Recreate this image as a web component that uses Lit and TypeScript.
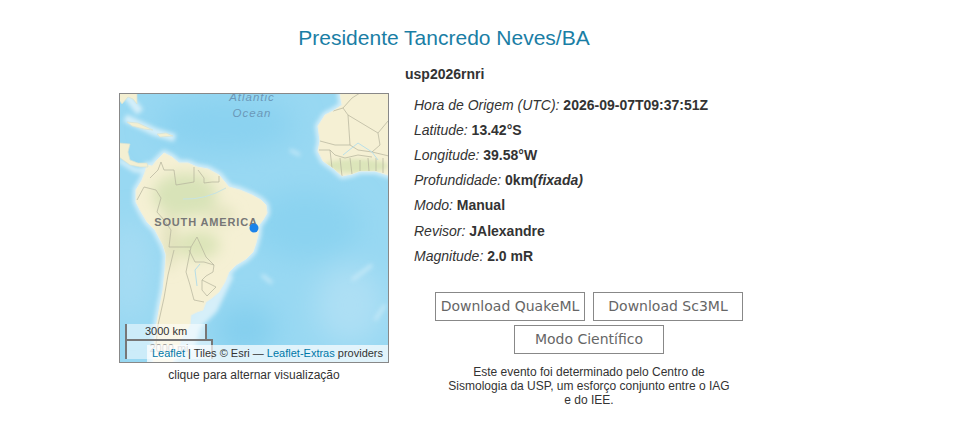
import { LitElement, html, css, svg } from "lit";
import { customElement } from "lit/decorators.js";

const rows: [string, string, string?][] = [
  ["Hora de Origem (UTC):", "2026-09-07T09:37:51Z"],
  ["Latitude:", "13.42°S"],
  ["Longitude:", "39.58°W"],
  ["Profundidade:", "0km", "(fixada)"],
  ["Modo:", "Manual"],
  ["Revisor:", "JAlexandre"],
  ["Magnitude:", "2.0 mR"],
];

const SA = "M147 165 L152 166 L157 160 L164 153 L172 157 L179 163 L188 163 L197 167 L208 169 L219 175 L224 181 L229 187 L240 190 L252 195 L261 200 L266 205 L267 213 L263 220 L259 225 L258 235 L256 243 L253 252 L246 259 L236 265 L229 272 L225 282 L219 292 L212 298 L206 302 L203 310 L197 312 L191 315 L190 325 L182 338 L177 352 L172 363 L153 363 L154 355 L155 335 L157 322 L160 305 L163 290 L165 270 L166 255 L163 245 L155 230 L147 222 L140 210 L136 202 L136 190 L142 180 L145 172 Z";
const AF = "M340 93 L342 105 L333 111 L325 115 L318 126 L320 141 L318 151 L323 161 L333 168 L342 176 L352 174 L360 171 L375 171 L388 175 L389 175 L389 93 Z";

const mapArt = svg`
  <defs>
    <filter id="b8" x="-30%" y="-30%" width="160%" height="160%"><feGaussianBlur stdDeviation="7"/></filter>
    <filter id="b2" x="-30%" y="-30%" width="160%" height="160%"><feGaussianBlur stdDeviation="2"/></filter>
    <filter id="b14" x="-40%" y="-40%" width="180%" height="180%"><feGaussianBlur stdDeviation="14"/></filter>
    <clipPath id="sa"><path d=${SA}/></clipPath>
    <clipPath id="af"><path d=${AF}/></clipPath>
  </defs>
  <rect x="119" y="93" width="270" height="270" fill="#98d8f2"/>
  <g filter="url(#b14)">
    <ellipse cx="225" cy="125" rx="70" ry="28" fill="#8ad2f0"/>
    <ellipse cx="305" cy="225" rx="55" ry="35" fill="#8bd3f0"/>
    <ellipse cx="245" cy="330" rx="30" ry="26" fill="#84cfee"/>
    <ellipse cx="350" cy="305" rx="35" ry="40" fill="#addff4"/>
    <ellipse cx="130" cy="270" rx="22" ry="50" fill="#a6dcf3"/>
  </g>
  <g filter="url(#b2)" fill="none" stroke="#d6eff9" stroke-width="6" stroke-linejoin="round">
    <path d=${SA}/><path d=${AF}/>
    <path d="M125 93 L140 112 M125 118 L155 132 L175 138" stroke-width="8"/>
    <path d="M119 160 L135 170 L150 170" stroke-width="5"/>
    <path d="M228 274 L212 308 L195 325 L188 350" stroke-width="12"/>
    <path d="M262 275 L272 283 M352 280 L372 265 M375 320 L385 305 M290 150 L300 155" stroke="#c8eaf8" stroke-width="3"/>
  </g>
  <path d=${SA} fill="#f5f0d4" stroke="#eef0e0" stroke-width="1"/>
  <g clip-path="url(#sa)">
    <g filter="url(#b8)">
      <ellipse cx="185" cy="195" rx="32" ry="22" fill="#d8e3b8"/>
      <ellipse cx="198" cy="245" rx="22" ry="14" fill="#dbe4b8"/>
      <ellipse cx="170" cy="240" rx="5" ry="30" fill="#d9dcb4"/>
      <ellipse cx="220" cy="215" rx="15" ry="9" fill="#e2e4bf"/>
    </g>
    <g fill="none" stroke="#b3b19b" stroke-width=".7" stroke-linejoin="round">
      <path d="M161 162 L164 170 L174 170 L176 185 L194 182 L194 167"/>
      <path d="M198 170 L204 178 L204 183 L212 182 L219 182 L219 176"/>
      <path d="M137 200 L144 187 L156 190 L161 198 L157 212 L164 220 L171 230"/>
      <path d="M171 230 L169 247 L191 247 L197 237 L206 257 L214 265"/>
      <path d="M174 250 L168 275 L164 298 L158 325 L156 345"/>
      <path d="M189 250 L195 262 L204 262 L214 265 L213 272 L206 276 L202 280 L216 287 L207 296 L202 290 L202 280"/>
      <path d="M191 247 L186 272 L190 285 L194 300 L204 302"/>
      <path d="M150 178 L158 170 L161 162"/>
    </g>
  </g>
  <path d="M183 199 Q205 200 226 188" fill="none" stroke="#c6e3e3" stroke-width="1"/>
  <path d="M197 286 L195 270 L200 264" fill="none" stroke="#b5dde8" stroke-width="1"/>
  <path d=${AF} fill="#f5f0d4" stroke="#eef0e0" stroke-width="1"/>
  <g clip-path="url(#af)">
    <g filter="url(#b2)">
      <ellipse cx="356" cy="166" rx="32" ry="7" fill="#dce5ba"/>
    </g>
    <g fill="none" stroke="#b3b19b" stroke-width=".7" stroke-linejoin="round">
      <path d="M333 111 L343 108 L352 98 L360 93"/>
      <path d="M343 108 L348 115 L350 145 L335 145 L320 141"/>
      <path d="M348 115 L378 133 L388 121"/>
      <path d="M378 133 L380 145 L372 152 L389 156"/>
      <path d="M350 145 L358 150 L372 152"/>
      <path d="M319 150 L330 150 L335 155 L345 158 L358 155 L372 157"/>
      <path d="M330 150 L332 168 M340 158 L342 176 M350 158 L352 174 M360 160 L360 171 M368 158 L369 171 M376 158 L376 171 M383 158 L383 173"/>
    </g>
    <path d="M343 155 L358 143 L372 152 L378 160" fill="none" stroke="#b9dfe8" stroke-width="1"/>
  </g>
  <g fill="#f3efd2" stroke="#d6e2d6" stroke-width=".7">
    <path d="M119 93 L137 93 L137 104 L133 99 L128 97 L122 104 L119 100 Z"/>
    <path d="M127 122 L138 123 L153 130 L144 129 L132 126 Z"/>
    <path d="M157 134 L166 133 L173 136 L160 137 Z"/>
    <path d="M119 143 L130 144 L128 152 L130 160 L138 163 L147 163 L148 167 L140 167 L130 165 L119 157 Z"/>
  </g>
  <text x="252" y="101" class="sea" letter-spacing="1">Atlantic</text>
  <text x="252" y="117" class="sea" letter-spacing="1">Ocean</text>
  <text x="206" y="226" class="cont">SOUTH AMERICA</text>
  <circle cx="254" cy="228" r="4.5" fill="#1a82ea"/>
`;

@customElement("app-root")
export class AppRoot extends LitElement {
  static styles = css`
    :host { display: block; height: 440px; font-family: "Liberation Sans", Arial, sans-serif; color: #333; background: #fff; overflow: hidden; }
    .title { margin: 0; padding-top: 25px; text-align: center; font-size: 21px; line-height: 26px; font-weight: 400; color: #1a7ea5; width: 888px; }
    .body { display: grid; grid-template-columns: 270px 1fr; column-gap: 16px; padding: 15px 0 0 119px; width: 640px; }
    .left { padding-top: 27px; }
    .map { position: relative; width: 270px; height: 270px; box-sizing: border-box; border: 1px solid #888; overflow: hidden; }
    .map svg { position: absolute; left: -1px; top: -1px; display: block; }
    .sea { font: italic 11.5px "Liberation Sans", Arial, sans-serif; fill: #6b98b8; text-anchor: middle; }
    .cont { font: bold 11px "Liberation Sans", Arial, sans-serif; fill: #777; text-anchor: middle; letter-spacing: .85px; }
    .scale { position: absolute; left: 5px; box-sizing: border-box; border: 2px solid #777; border-top: 0; background: rgba(255,255,255,.5); color: #333; font-size: 11px; line-height: 15px; text-align: center; }
    .km { top: 230px; width: 82px; height: 17px; }
    .mi { top: 245px; width: 88px; height: 20px; border-top: 2px solid #777; border-bottom: 0; color: #999; }
    .attr { position: absolute; right: 0; bottom: 0; width: 241px; height: 17px; box-sizing: border-box; background: rgba(255,255,255,.7); color: #333; font-size: 11px; line-height: 17px; text-align: center; white-space: nowrap; }
    .attr a { color: #0078a8; }
    .cap { margin: 5px 0 0; font-size: 12px; line-height: 15px; text-align: center; width: 270px; }
    .id { font-size: 14px; font-weight: 700; line-height: 16px; margin: 0; }
    .list { list-style: none; margin: 10.65px 0 0; padding: 0 0 0 9px; }
    .list li { font-size: 14px; line-height: 25.2px; white-space: nowrap; }
    .btns { display: flex; flex-wrap: wrap; justify-content: center; gap: 4px 8px; width: 320px; margin: 23.35px 0 0 24px; }
    .btn { box-sizing: border-box; width: 150px; height: 29px; border: 1px solid #888; color: #666; font: 14px/27px "DejaVu Sans", Verdana, sans-serif; text-align: center; white-space: nowrap; background: #fff; }
    .note { margin: 11px 0 0 40px; width: 288px; text-align: center; font-size: 12px; line-height: 14px; }
  `;

  render() {
    return html`
      <h2 class="title">Presidente Tancredo Neves/BA</h2>
      <div class="body">
        <div class="left">
          <div class="map">
            <svg width="270" height="270" viewBox="119 93 270 270">${mapArt}</svg>
            <div class="scale km">3000 km</div>
            <div class="scale mi">2000 mi</div>
            <div class="attr"><a>Leaflet</a> | Tiles © Esri — <a>Leaflet-Extras</a> providers</div>
          </div>
          <p class="cap">clique para alternar visualização</p>
        </div>
        <div class="right">
          <p class="id">usp2026rnri</p>
          <ul class="list">
            ${rows.map(([k, v, x]) => html`<li><i>${k}</i> <b>${v}${x ? html`<i>${x}</i>` : ""}</b></li>`)}
          </ul>
          <div class="btns">
            <div class="btn">Download QuakeML</div>
            <div class="btn">Download Sc3ML</div>
            <div class="btn">Modo Científico</div>
          </div>
          <p class="note">Este evento foi determinado pelo Centro de Sismologia da USP, um esforço conjunto entre o IAG e do IEE.</p>
        </div>
      </div>
    `;
  }
}
